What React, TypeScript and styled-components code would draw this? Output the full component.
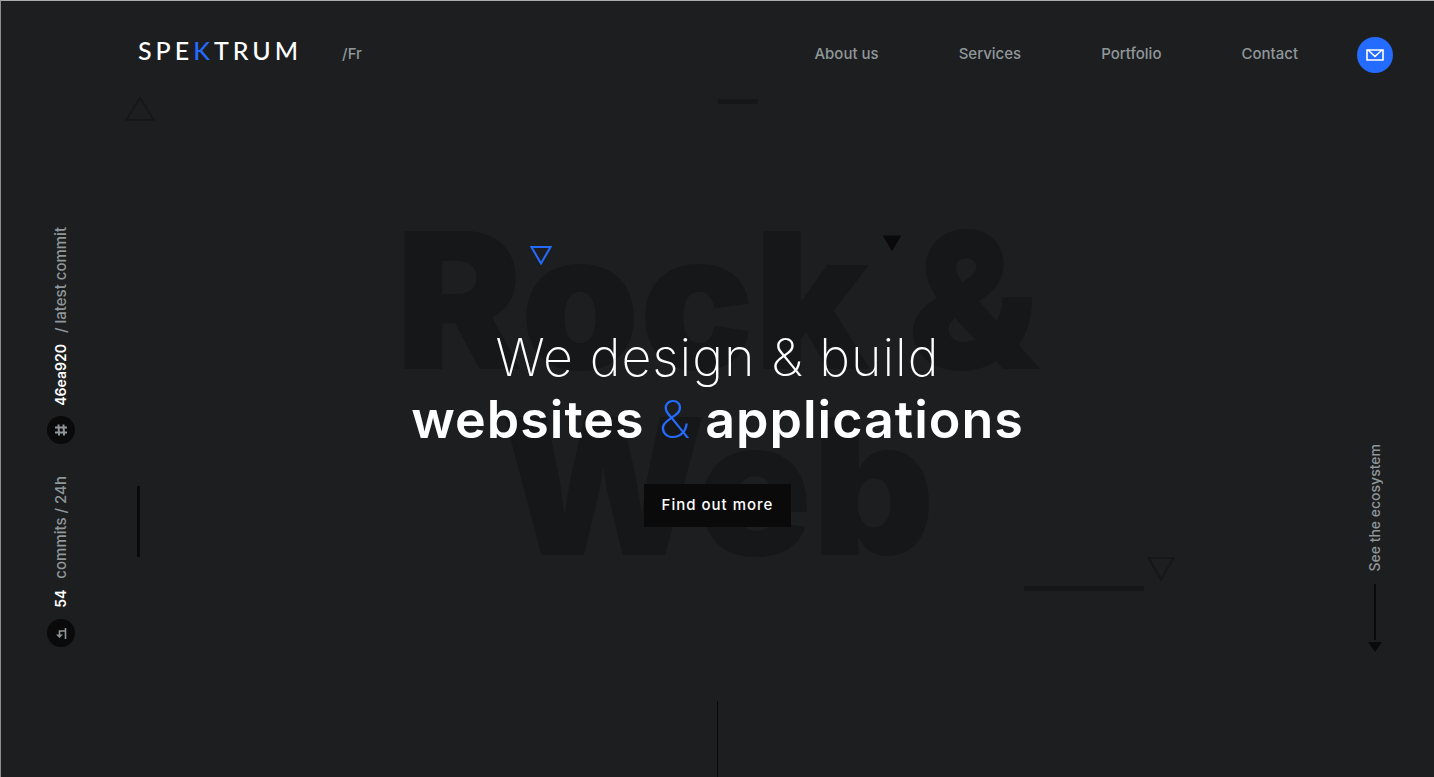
import React from "react";
import styled, { createGlobalStyle } from "styled-components";

const ink = "#0a0a0b";
const shade = "#161719";
const grey = "#8f979a";
const blue = "#246bff";

const GlobalStyle = createGlobalStyle`
  *, *::before, *::after { box-sizing: border-box; }
  body {
    margin: 0;
    background: #1d1e20;
    color: #fff;
    font: 500 15px/20px Inter, "Liberation Sans", sans-serif;
  }
  a { color: inherit; text-decoration: none; }
`;

const Page = styled.div`
  position: relative;
  display: flex;
  flex-direction: column;
  min-height: 100vh;
  overflow: hidden;
  border-top: 1px solid #a9abac;
  border-left: 1px solid #8c8e8f;
`;

const Header = styled.header`
  display: flex;
  align-items: center;
  padding: 36px 41px 36px 137px;
`;

const Logo = styled.a`
  font-family: Lato, "Liberation Sans", sans-serif;
  font-size: 25px;
  line-height: 26px;
  font-weight: 500;
  letter-spacing: 4px;
  padding-bottom: 10px;
`;

const LogoAccent = styled.span`
  color: ${blue};
`;

const Language = styled.a`
  margin-left: 40px;
  padding-bottom: 2px;
  color: ${grey};
`;

const Nav = styled.nav`
  display: flex;
  gap: 80px;
  margin-left: auto;
  margin-right: 59px;
  padding-bottom: 2px;
  color: ${grey};
`;

const MailButton = styled.button`
  display: grid;
  place-items: center;
  width: 36px;
  height: 36px;
  padding: 0;
  border: 0;
  border-radius: 50%;
  background: ${blue};
  cursor: pointer;
`;

const Main = styled.main`
  flex: 1;
  display: grid;
  grid-template-columns: 80px 1fr 80px;
`;

const StatsRail = styled.aside`
  display: flex;
  flex-direction: column;
  justify-content: flex-end;
  gap: 32px;
  padding: 0 0 130px 46px;
`;

const Stat = styled.div`
  display: flex;
  flex-direction: column-reverse;
  align-items: center;
  gap: 11px;
  width: 28px;
`;

const StatBadge = styled.span`
  display: grid;
  place-items: center;
  width: 28px;
  height: 28px;
  border-radius: 50%;
  background: ${ink};
`;

const VerticalText = styled.span`
  writing-mode: vertical-rl;
  transform: rotate(180deg);
  line-height: 20px;
  color: ${grey};
  white-space: nowrap;
`;

const StatValue = styled.strong`
  margin-bottom: 11px;
  font-size: 14px;
  font-weight: 600;
  color: #fff;
`;

const Hero = styled.section`
  display: grid;
  align-items: center;
  justify-items: center;
  text-align: center;
  > * { grid-area: 1 / 1; }
`;

const Backdrop = styled.div`
  padding-bottom: 100px;
  font-size: 190px;
  line-height: 186px;
  font-weight: 900;
  color: ${shade};
  user-select: none;
`;

const Pitch = styled.div`
  display: flex;
  flex-direction: column;
  align-items: center;
  gap: 33px;
  padding-bottom: 33px;
  z-index: 1;
`;

const Title = styled.h1`
  margin: 0;
  font-size: 52px;
  line-height: 62px;
  font-weight: 200;
  letter-spacing: 1px;
  strong { font-weight: 600; }
`;

const Ampersand = styled.span`
  font-weight: 200;
  color: ${blue};
`;

const MoreButton = styled.button`
  padding: 11px 18px 12px;
  border: 0;
  background: ${ink};
  color: #fff;
  font: inherit;
  letter-spacing: 1px;
  cursor: pointer;
`;

const EcosystemRail = styled.aside`
  display: flex;
  flex-direction: column;
  justify-content: flex-end;
  align-items: flex-end;
  padding: 0 41px 125px 0;
`;

const EcosystemLink = styled.a`
  display: flex;
  flex-direction: column;
  align-items: center;
  gap: 12px;
  width: 36px;
  font-size: 14px;
`;

const Ornament = styled.span<{ $x: string; $y: string }>`
  position: absolute;
  left: ${(p) => p.$x};
  top: ${(p) => p.$y};
  line-height: 0;
  pointer-events: none;
`;

const Bar = styled.i<{ $w: number; $h: number; $tone?: string }>`
  display: block;
  width: ${(p) => p.$w}px;
  height: ${(p) => p.$h}px;
  background: ${(p) => p.$tone ?? shade};
`;

const CenterLine = styled.span`
  position: absolute;
  left: calc(50% - 1px);
  bottom: 0;
  width: 1px;
  height: 76px;
  background: ${ink};
`;

function Triangle({ w, h, color, filled, up }: { w: number; h: number; color: string; filled?: boolean; up?: boolean }) {
  const points = up ? `1.5,${h - 1} ${w / 2},1.5 ${w - 1.5},${h - 1}` : `1.5,1 ${w - 1.5},1 ${w / 2},${h - 1.5}`;
  return (
    <svg width={w} height={h} aria-hidden="true">
      <polygon points={points} fill={filled ? color : "none"} stroke={color} strokeWidth={filled ? 1 : 2} />
    </svg>
  );
}

const links = ["About us", "Services", "Portfolio", "Contact"];

export default function App() {
  return (
    <>
      <GlobalStyle />
      <Page>
        <Ornament $x="124px" $y="95px"><Triangle w={30} h={25} color={shade} up /></Ornament>
        <Ornament $x="50%" $y="98px"><Bar $w={40} $h={5} /></Ornament>
        <Ornament $x="136px" $y="485px"><Bar $w={3} $h={71} $tone={ink} /></Ornament>
        <Ornament $x="calc(50% + 306px)" $y="585px"><Bar $w={120} $h={5} /></Ornament>
        <Ornament $x="calc(50% + 429px)" $y="556px"><Triangle w={28} h={24} color={shade} /></Ornament>
        <CenterLine />

        <Header>
          <Logo href="#" aria-label="Spektrum">SPE<LogoAccent>K</LogoAccent>TRUM</Logo>
          <Language href="#fr">/Fr</Language>
          <Nav>
            {links.map((label) => <a key={label} href="#">{label}</a>)}
          </Nav>
          <MailButton aria-label="Email us">
            <svg width="18" height="12" fill="none" stroke="#fff" strokeWidth="1.6" aria-hidden="true">
              <path d="M1 1H17V11H1ZM2 1L9 7.5L16 1" />
            </svg>
          </MailButton>
        </Header>

        <Main>
          <StatsRail>
            <Stat>
              <StatBadge>
                <svg width="14" height="14" fill="none" stroke={grey} strokeWidth="2" aria-hidden="true">
                  <path d="M1 4.5H13M1 9.5H13M4.5 1.5L5 12.5M9.5 1.5L10 12.5" />
                </svg>
              </StatBadge>
              <VerticalText><StatValue>46ea920</StatValue>/ latest commit</VerticalText>
            </Stat>
            <Stat>
              <StatBadge>
                <svg width="12" height="14" fill="none" stroke={grey} strokeWidth="1.6" aria-hidden="true">
                  <path d="M10.5 2V13M10.5 5H4.5V10" />
                  <path d="M1 8.5H8L4.5 12Z" fill={grey} stroke="none" />
                </svg>
              </StatBadge>
              <VerticalText><StatValue>54</StatValue>commits / 24h</VerticalText>
            </Stat>
          </StatsRail>

          <Hero>
            <Backdrop aria-hidden="true">Rock &amp;<br />Web</Backdrop>
            <Pitch>
              <Title>
                We design &amp; build<br />
                <strong>websites <Ampersand>&amp;</Ampersand> applications</strong>
              </Title>
              <MoreButton>Find out more</MoreButton>
            </Pitch>
          </Hero>

          <EcosystemRail>
            <EcosystemLink href="#ecosystem">
              <VerticalText>See the ecosystem</VerticalText>
              <svg width="14" height="68" fill={ink} aria-hidden="true">
                <path d="M6 0H8V56H6ZM0 58H14L7 68Z" />
              </svg>
            </EcosystemLink>
          </EcosystemRail>
        </Main>

        <Ornament $x="calc(50% - 188px)" $y="245px"><Triangle w={22} h={19} color={blue} /></Ornament>
        <Ornament $x="calc(50% + 164px)" $y="234px"><Triangle w={20} h={17} color={ink} filled /></Ornament>
      </Page>
    </>
  );
}
